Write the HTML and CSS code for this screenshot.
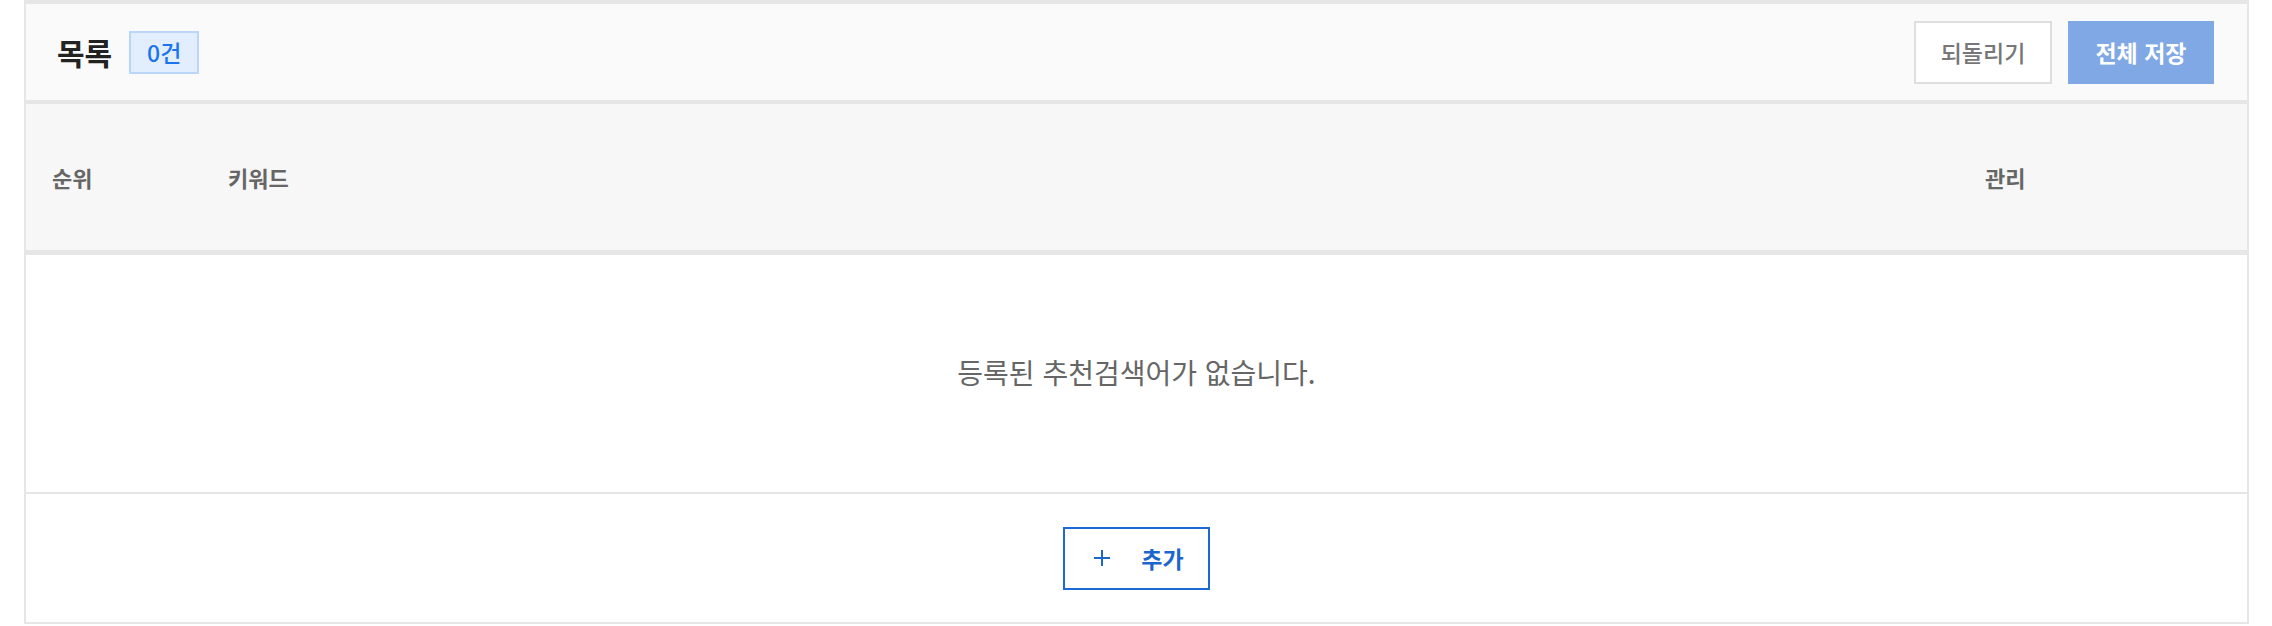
FILE: index.html
```html
<!DOCTYPE html>
<html lang="ko">
<head>
<meta charset="utf-8">
<title>목록</title>
<link rel="stylesheet" href="styles.css">
</head>
<body>
<div class="panel">
  <div class="panel-head">
    <div class="title-wrap">
      <h2 class="title">목록</h2>
      <span class="count">0건</span>
    </div>
    <div class="actions">
      <button class="btn btn-ghost">되돌리기</button>
      <button class="btn btn-primary">전체 저장</button>
    </div>
  </div>
  <div class="table-head">
    <div class="th">순위</div>
    <div class="th">키워드</div>
    <div class="th">관리</div>
  </div>
  <div class="empty">등록된 추천검색어가 없습니다.</div>
  <div class="panel-foot">
    <button class="btn-add">
      <svg class="plus" width="18" height="18" viewBox="0 0 18 18" aria-hidden="true"><path d="M9 1V17M1 9H17" stroke="currentColor" stroke-width="2" fill="none"/></svg>
      <span>추가</span>
    </button>
  </div>
</div>
</body>
</html>
```

FILE: styles.css
```css
* { box-sizing: border-box; }
html, body { margin: 0; padding: 0; background: #fff; }
body {
  padding: 0 23px 0 24px;
  font-family: "Noto Sans CJK KR", "Noto Sans", sans-serif;
}
.panel {
  border: 2px solid #e6e6e6;
  border-top-width: 4px;
  background: #fff;
}
.panel-head {
  height: 96px;
  background: #fafafa;
  border-bottom: 4px solid #e6e6e6;
  display: flex;
  align-items: center;
  justify-content: space-between;
  padding: 0 33px 0 31px;
  box-sizing: content-box;
}
.title-wrap { display: flex; align-items: center; gap: 17px; }
.title {
  margin: 0;
  font-size: 30px;
  font-weight: 700;
  color: #222;
  line-height: 1;
}
.count {
  height: 43px;
  width: 70px;
  display: flex;
  align-items: center;
  justify-content: center;
  border: 2px solid #b9d5fa;
  background: #e2eefd;
  color: #1b74ee;
  font-size: 23px;
  font-weight: 500;
}
.actions { display: flex; gap: 16px; }
.btn {
  height: 63px;
  font-family: inherit;
  font-size: 23px;
  border: 2px solid transparent;
  display: flex;
  align-items: center;
  justify-content: center;
  cursor: pointer;
}
.btn-ghost {
  width: 138px;
  background: #fff;
  border-color: #dedede;
  color: #777;
  font-weight: 500;
}
.btn-primary {
  width: 146px;
  background: #7fa8e5;
  border-color: #7fa8e5;
  color: #fff;
  font-weight: 700;
}
.table-head {
  height: 146px;
  background: #f7f7f7;
  border-bottom: 5px solid #e6e6e6;
  box-sizing: content-box;
  display: grid;
  grid-template-columns: 176px 1fr 288px;
  align-items: center;
}
.th {
  padding-left: 26px;
  font-size: 22px;
  font-weight: 700;
  color: #666;
}
.empty {
  height: 233px;
  padding-bottom: 4px;
  display: flex;
  align-items: center;
  justify-content: center;
  font-size: 28px;
  color: #666;
  border-bottom: 2px solid #e6e6e6;
  box-sizing: content-box;
}
.panel-foot {
  height: 128px;
  display: flex;
  align-items: center;
  justify-content: center;
}
.btn-add {
  width: 147px;
  height: 63px;
  border: 2px solid #1d6ad4;
  background: #fff;
  color: #1b66cc;
  font-family: inherit;
  font-size: 23px;
  font-weight: 700;
  display: flex;
  align-items: center;
  justify-content: center;
  gap: 30px;
  padding: 0 0 0 4px;
  cursor: pointer;
}
.plus { display: block; }
```
